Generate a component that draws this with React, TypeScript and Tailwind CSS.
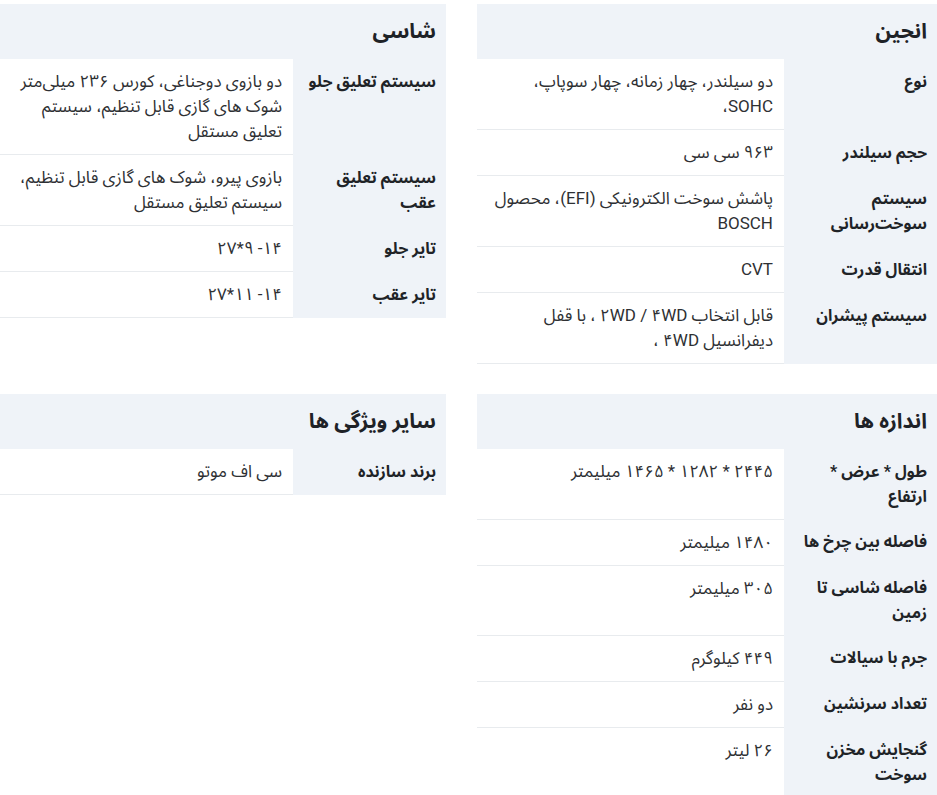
type Row = { label: string; value: string }

interface SpecCardProps {
  title: string
  rows: Row[]
  width: string
}

// line breaks follow the original layout
const engine: Row[] = [
  { label: "نوع", value: "دو سیلندر، چهار زمانه، چهار سوپاپ،\nSOHC،" },
  { label: "حجم سیلندر", value: "۹۶۳ سی سی" },
  { label: "سیستم سوخت‌رسانی", value: "پاشش سوخت الکترونیکی (EFI)، محصول\nBOSCH" },
  { label: "انتقال قدرت", value: "CVT" },
  { label: "سیستم پیشران", value: "قابل انتخاب ۲WD / ۴WD ، با قفل\nدیفرانسیل ۴WD ،" },
]

const chassis: Row[] = [
  {
    label: "سیستم تعلیق جلو",
    value: "دو بازوی دوجناغی، کورس ۲۳۶ میلی‌متر\nشوک های گازی قابل تنظیم، سیستم\nتعلیق مستقل",
  },
  { label: "سیستم تعلیق عقب", value: "بازوی پیرو، شوک های گازی قابل تنظیم،\nسیستم تعلیق مستقل" },
  { label: "تایر جلو", value: "۱۴- ۹*۲۷" },
  { label: "تایر عقب", value: "۱۴- ۱۱*۲۷" },
]

const dimensions: Row[] = [
  { label: "طول * عرض * ارتفاع", value: "۲۴۴۵ * ۱۲۸۲ * ۱۴۶۵ میلیمتر" },
  { label: "فاصله بین چرخ ها", value: "۱۴۸۰ میلیمتر" },
  { label: "فاصله شاسی تا زمین", value: "۳۰۵ میلیمتر" },
  { label: "جرم با سیالات", value: "۴۴۹ کیلوگرم" },
  { label: "تعداد سرنشین", value: "دو نفر" },
  { label: "گنجایش مخزن سوخت", value: "۲۶ لیتر" },
]

const other: Row[] = [{ label: "برند سازنده", value: "سی اف موتو" }]

function SpecCard({ title, rows, width }: SpecCardProps) {
  return (
    <div className={width}>
      <h3 className="h-[55px] flex items-center px-[10px] bg-[#eff3f8] text-[21px] font-bold text-[#1e2227]">
        {title}
      </h3>
      <table className="w-full table-fixed border-collapse">
        <tbody>
          {rows.map((row) => (
            <tr key={row.label}>
              <th className="w-[153px] bg-[#eff3f8] px-[10px] py-[10px] align-top text-right text-[16px] leading-[25px] font-bold text-[#202327]">
                {row.label}
              </th>
              <td className="bg-white pr-[11px] pl-[4px] py-[10px] align-top text-right text-[17px] leading-[25px] text-[#2e3033] whitespace-pre-line border-b border-[#e8ebee]">
                {row.value}
              </td>
            </tr>
          ))}
        </tbody>
      </table>
    </div>
  )
}

export default function App() {
  return (
    <div
      dir="rtl"
      className="w-[937px] pt-[4px] bg-white grid grid-cols-[460px_446px] gap-x-[31px] gap-y-[30px] items-start"
      style={{ fontFamily: 'Roboto, "Noto Sans Arabic", Vazirmatn, "DejaVu Sans", sans-serif' }}
    >
      <SpecCard title="انجین" rows={engine} width="w-[460px]" />
      <SpecCard title="شاسی" rows={chassis} width="w-[446px]" />
      <SpecCard title="اندازه ها" rows={dimensions} width="w-[460px]" />
      <SpecCard title="سایر ویژگی ها" rows={other} width="w-[446px]" />
    </div>
  )
}
